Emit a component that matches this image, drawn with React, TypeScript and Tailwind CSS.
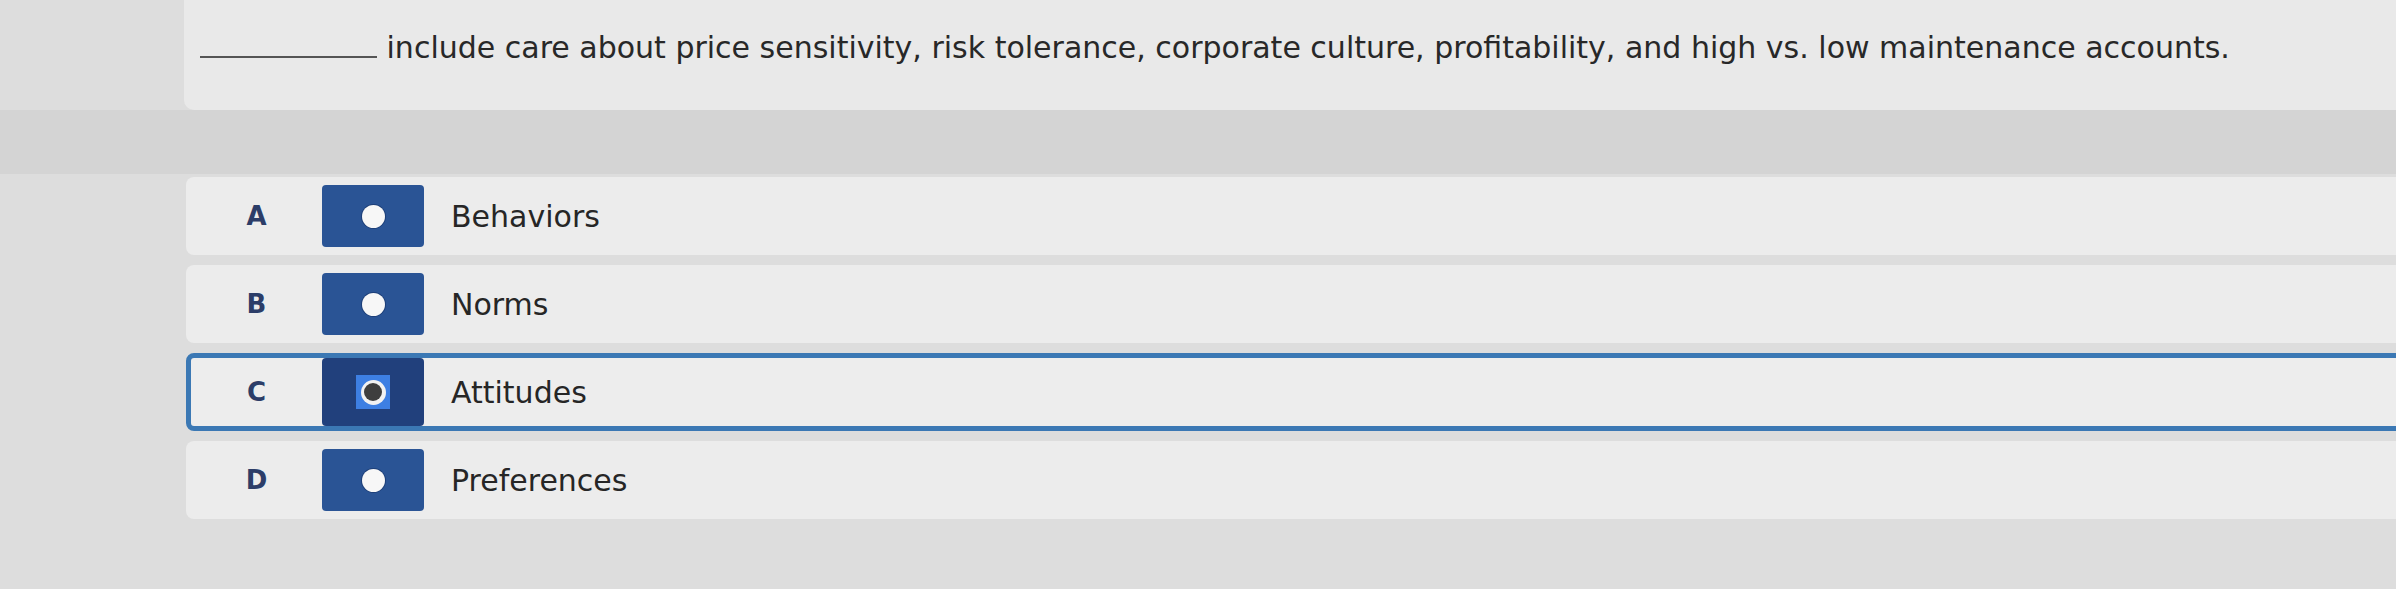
const options = [
  { letter: 'A', label: 'Behaviors' },
  { letter: 'B', label: 'Norms' },
  { letter: 'C', label: 'Attitudes', selected: true },
  { letter: 'D', label: 'Preferences' },
]

const Radio = ({ selected }: { selected?: boolean }) => {
  if (selected) {
    return (
      <div className="w-[34px] h-[34px] bg-[#3d7fe3] flex items-center justify-center">
        <div className="w-[25px] h-[25px] rounded-full bg-[#f2f2f2] flex items-center justify-center">
          <div className="w-[18px] h-[18px] rounded-full bg-[#3e3e3e]" />
        </div>
      </div>
    )
  }
  return <div className="w-[23px] h-[23px] rounded-full bg-[#f7f7f7] shadow-[0_0_0_1px_#1d3f78]" />
}

const Option = ({ letter, label, selected }: { letter: string; label: string; selected?: boolean }) => {
  return (
    <div
      className={
        selected
          ? 'h-[78px] -mr-[20px] flex items-center rounded-[8px] bg-[#ededed] border-[5px] border-[#3b78b4]'
          : 'h-[78px] -mr-[20px] flex items-center rounded-[8px] bg-[#ececec] border-[5px] border-transparent'
      }
    >
      <div className="w-[131px] flex justify-center">
        <span className="text-[26px] font-bold text-[#2c3d68]">{letter}</span>
      </div>
      <div
        className={
          selected
            ? 'w-[102px] h-[68px] rounded-[4px] bg-[#21407c] flex items-center justify-center'
            : 'w-[102px] h-[62px] rounded-[4px] bg-[#2a5495] flex items-center justify-center'
        }
      >
        <Radio selected={selected} />
      </div>
      <span className="ml-[27px] text-[30px] text-[#262626]">{label}</span>
    </div>
  )
}

const App = () => {
  return (
    <div className="w-[2396px] h-[589px] overflow-hidden bg-[#dddddd] font-['DejaVu_Sans',sans-serif]">
      <div className="ml-[184px] h-[110px] rounded-bl-[10px] bg-[#e9e9e9] pt-[28px] pl-[16px]">
        <p className="text-[30px] leading-[40px] text-[#282828] whitespace-nowrap">
          <span className="inline-block w-[177px] border-b-2 border-[#555]" /> include care about price sensitivity, risk tolerance, corporate culture, profitability, and high vs. low maintenance accounts.
        </p>
      </div>
      <div className="h-[64px] bg-[#d4d4d4]" />
      <div className="ml-[186px] mt-[3px] flex flex-col gap-[10px]">
        {options.map((o) => (
          <Option key={o.letter} {...o} />
        ))}
      </div>
    </div>
  )
}

export default App
